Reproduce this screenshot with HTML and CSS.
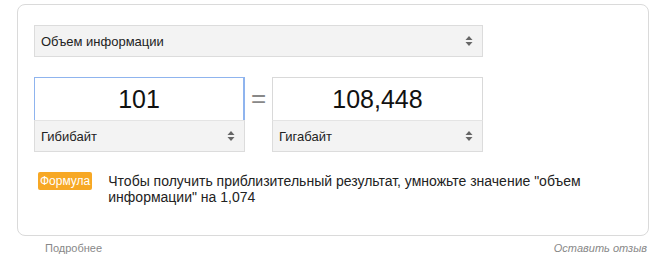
FILE: index.html
```
<!DOCTYPE html>
<html lang="ru">
<head>
<meta charset="utf-8">
<link rel="stylesheet" href="styles.css">
</head>
<body>
<div class="card">
  <div class="select wide">
    <span>Объем информации</span>
    <svg class="arrows" width="8" height="12" viewBox="0 0 8 12"><path d="M4 1 L7.5 5 L0.5 5 Z M4 11 L7.5 7 L0.5 7 Z" fill="#666"/></svg>
  </div>
  <div class="conv">
    <div class="col">
      <div class="num active">101</div>
      <div class="select">
        <span>Гибибайт</span>
        <svg class="arrows" width="8" height="12" viewBox="0 0 8 12"><path d="M4 1 L7.5 5 L0.5 5 Z M4 11 L7.5 7 L0.5 7 Z" fill="#666"/></svg>
      </div>
    </div>
    <div class="eq">=</div>
    <div class="col">
      <div class="num">108,448</div>
      <div class="select">
        <span>Гигабайт</span>
        <svg class="arrows" width="8" height="12" viewBox="0 0 8 12"><path d="M4 1 L7.5 5 L0.5 5 Z M4 11 L7.5 7 L0.5 7 Z" fill="#666"/></svg>
      </div>
    </div>
  </div>
  <div class="formula">
    <span class="badge">Формула</span>
    <p>Чтобы получить приблизительный результат, умножьте значение "объем информации" на 1,074</p>
  </div>
</div>
<div class="footer">
  <span class="more">Подробнее</span>
  <span class="fb">Оставить отзыв</span>
</div>
</body>
</html>
```
FILE: styles.css
```
html, body { margin: 0; padding: 0; background: #fff; }
body { font-family: "Liberation Sans", Arial, sans-serif; color: #222; width: 672px; height: 258px; overflow: hidden; }
.card {
  box-sizing: border-box;
  margin: 4px 0 0 17px;
  width: 632px;
  height: 232px;
  border: 1px solid #dadada;
  border-radius: 8px;
  padding: 20px 16px 0 16px;
}
.select {
  box-sizing: border-box;
  height: 32px;
  background: #f3f3f3;
  border: 1px solid #dcdcdc;
  display: flex;
  align-items: center;
  justify-content: space-between;
  padding: 0 9px 0 6px;
  font-size: 13px;
  color: #222;
}
.select.wide { width: 449px; }
.select .arrows { flex: none; }
.conv { display: flex; align-items: flex-start; margin-top: 20px; }
.col { width: 211px; display: flex; flex-direction: column; }
.num {
  box-sizing: border-box;
  height: 43px;
  border: 1px solid #d9d9d9;
  border-bottom: none;
  display: flex;
  align-items: center;
  justify-content: center;
  font-size: 25px;
  color: #111;
  padding-top: 1px;
}
.num.active { border: 1px solid #8fb4ee; border-bottom: none; border-right-width: 2px; }
.col .select { border-top: 1px solid #e4e4e4; }
.eq { width: 27px; text-align: center; font-size: 26px; color: #888; line-height: 43px; }
.formula { display: flex; align-items: flex-start; margin-top: 20px; padding-left: 4px; }
.badge {
  flex: none;
  background: #f7a825;
  color: #fff;
  font-size: 12px;
  line-height: 18px;
  height: 18px;
  padding: 0 2px;
  border-radius: 2px;
}
.formula p {
  margin: 1px 0 0 16px;
  font-size: 14px;
  line-height: 16px;
  color: #222;
  width: 480px;
}
.footer {
  display: flex;
  justify-content: space-between;
  padding: 6px 25px 0 45px;
  font-size: 11px;
  color: #888;
}
.fb { font-style: italic; }
```
